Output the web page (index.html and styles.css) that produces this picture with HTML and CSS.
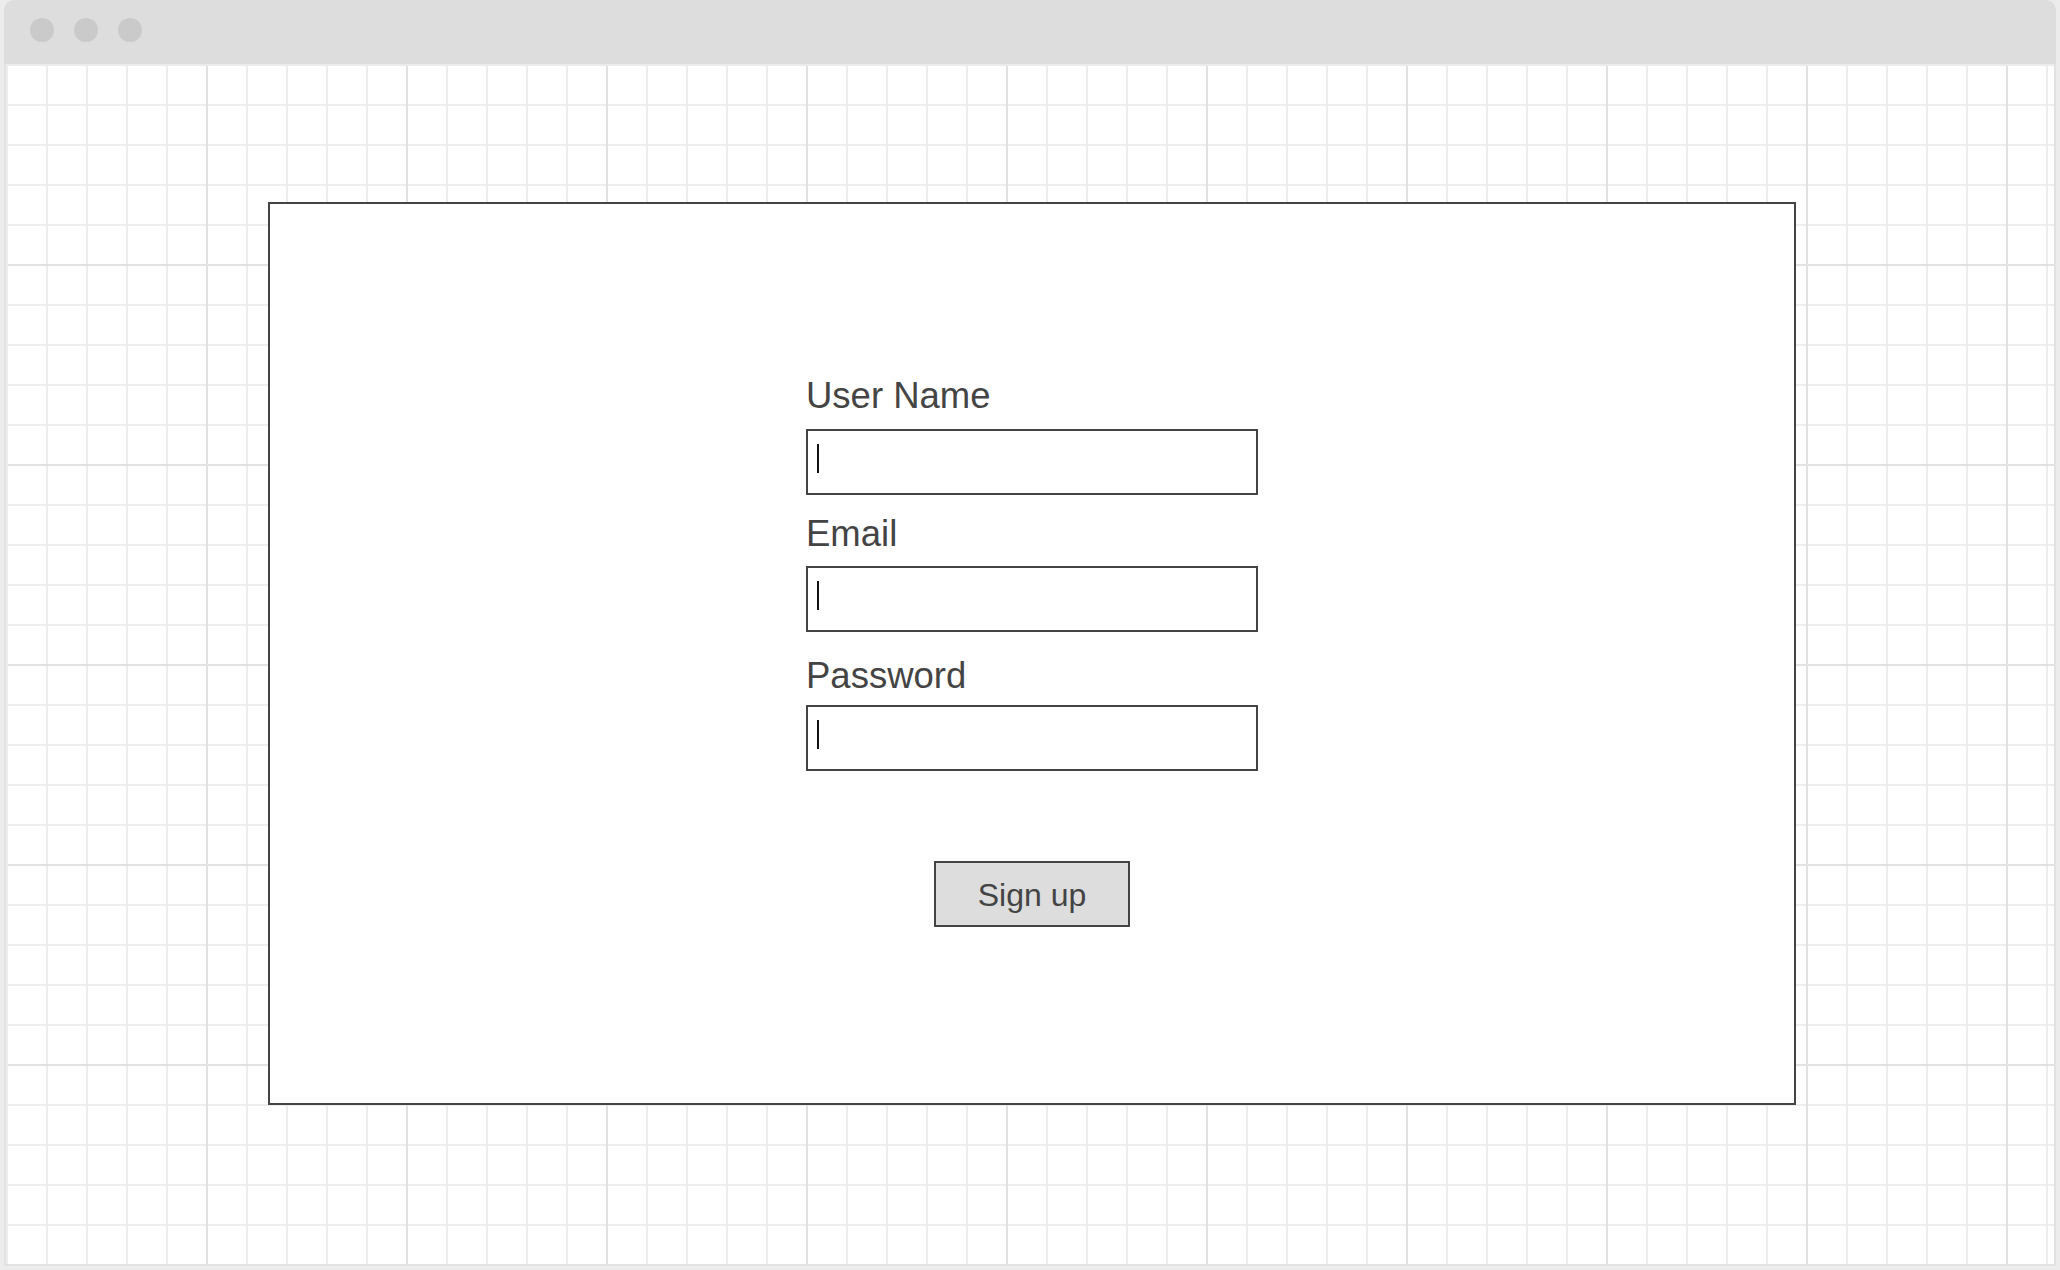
FILE: index.html
```html
<!DOCTYPE html>
<html lang="en">
<head>
<meta charset="utf-8">
<title>Sign up</title>
<link rel="stylesheet" href="styles.css">
</head>
<body>
<div class="window">
  <div class="titlebar">
    <span class="dot"></span>
    <span class="dot"></span>
    <span class="dot"></span>
  </div>
  <div class="canvas">
    <div class="card">
      <div class="form">
        <div class="label label-first">User Name</div>
        <div class="field"><span class="caret"></span></div>
        <div class="label label-second">Email</div>
        <div class="field"><span class="caret"></span></div>
        <div class="label label-third">Password</div>
        <div class="field"><span class="caret"></span></div>
        <div class="actions">
          <div class="button">Sign up</div>
        </div>
      </div>
    </div>
  </div>
</div>
</body>
</html>
```
FILE: styles.css
```css
* { box-sizing: border-box; }

html, body {
  margin: 0;
  padding: 0;
}

body {
  width: 2060px;
  height: 1270px;
  background: #ececec;
  font-family: "Liberation Sans", Arial, sans-serif;
  overflow: hidden;
}

.window {
  margin: 0 4px;
  height: 1266px;
  display: flex;
  flex-direction: column;
}

.titlebar {
  height: 64px;
  flex: none;
  background: #dddddd;
  border-radius: 10px 10px 0 0;
  display: flex;
  align-items: flex-start;
  gap: 20px;
  padding: 18px 0 0 26px;
}

.dot {
  width: 24px;
  height: 24px;
  border-radius: 50%;
  background: #cacaca;
}

.canvas {
  flex: 1;
  background-color: #ffffff;
  border: 2px solid #e2e2e2;
  border-top: none;
  padding: 2px 0 0 2px;
  background-origin: content-box;
  background-clip: content-box;
  background-image:
    linear-gradient(to right, transparent 198px, #e2e2e2 198px),
    linear-gradient(to bottom, transparent 198px, #e2e2e2 198px),
    linear-gradient(to right, transparent 38px, #eeeeee 38px),
    linear-gradient(to bottom, transparent 38px, #eeeeee 38px);
  background-size: 200px 200px, 200px 200px, 40px 40px, 40px 40px;
  display: flex;
  flex-direction: column;
}

.card {
  margin: 136px 258px 0 260px;
  height: 903px;
  background: #ffffff;
  border: 2px solid #444444;
  padding-top: 171px;
}

.form {
  width: 452px;
  margin: 0 auto;
  display: flex;
  flex-direction: column;
}

.label {
  font-size: 36.5px;
  line-height: 41px;
  color: #444444;
  height: 41px;
}

.label-second { margin-top: 18px; }
.label-third { margin-top: 23px; }

.field {
  margin-top: 13px;
  height: 66px;
  border: 2px solid #444444;
  background: #ffffff;
  padding: 13px 0 0 9px;
}

.label-second + .field { margin-top: 12px; }
.label-third + .field { margin-top: 9px; }

.caret {
  display: block;
  width: 2px;
  height: 29px;
  background: #111111;
}

.actions {
  margin-top: 90px;
  display: flex;
  justify-content: center;
}

.button {
  width: 196px;
  height: 66px;
  background: #dddddd;
  border: 2px solid #444444;
  font-size: 32px;
  color: #444444;
  display: flex;
  align-items: center;
  justify-content: center;
  padding-top: 2px;
}
```
